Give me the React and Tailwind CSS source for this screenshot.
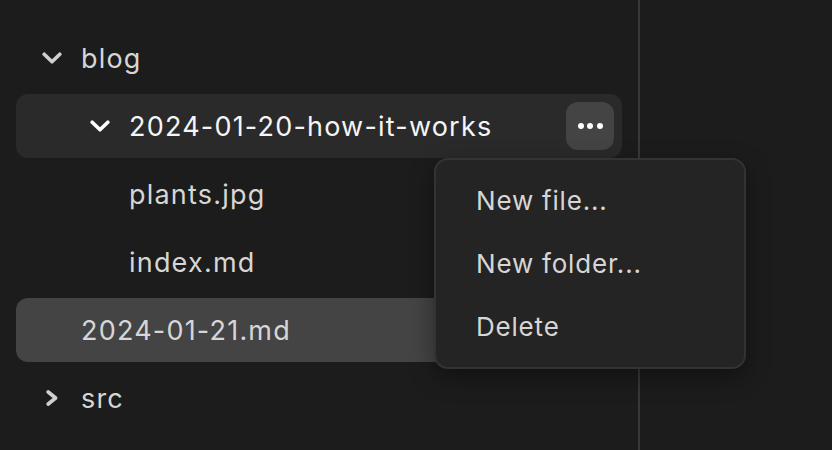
import React from "react";

const rows = [
  { name: "blog", depth: 0, kind: "open" },
  { name: "2024-01-20-how-it-works", depth: 1, kind: "open", active: true },
  { name: "plants.jpg", depth: 2, kind: "file" },
  { name: "index.md", depth: 2, kind: "file" },
  { name: "2024-01-21.md", depth: 1, kind: "file", selected: true },
  { name: "src", depth: 0, kind: "closed" },
];

function ChevronDown({ className }) {
  return (
    <svg width="20" height="12" viewBox="0 0 20 12" className={className}>
      <polyline
        points="2.2,2.2 10,9.8 17.8,2.2"
        fill="none"
        stroke="currentColor"
        strokeWidth="3.6"
        strokeLinecap="round"
        strokeLinejoin="round"
      />
    </svg>
  );
}

function ChevronRight({ className }) {
  return (
    <svg width="12" height="16" viewBox="0 0 12 16" className={className}>
      <polyline
        points="2.2,2 9.6,8 2.2,14"
        fill="none"
        stroke="currentColor"
        strokeWidth="3.6"
        strokeLinecap="round"
        strokeLinejoin="round"
      />
    </svg>
  );
}

function Row({ row }) {
  let pad = "pl-[26px]";
  if (row.kind === "open" && row.depth === 1) pad = "pl-[74px]";
  if (row.kind === "file" && row.depth === 1) pad = "pl-[65px]";
  if (row.kind === "file" && row.depth === 2) pad = "pl-[113px]";
  if (row.kind === "closed") pad = "pl-[30px]";

  let bg = "";
  if (row.active) bg = "bg-[#2a2a2a]";
  if (row.selected) bg = "bg-[#444444]";

  return (
    <div className={`h-16 flex items-center rounded-xl ${bg} ${pad}`}>
      {row.kind === "open" && (
        <ChevronDown className={row.active ? "text-white" : "text-[#d0d0d0]"} />
      )}
      {row.kind === "closed" && <ChevronRight className="text-[#d0d0d0]" />}
      <span
        className={`${row.kind === "open" ? "ml-[19px]" : ""} ${
          row.kind === "closed" ? "ml-[23px]" : ""
        } pt-[2px] text-[27px] tracking-[1.2px] ${row.active ? "text-[#f5f5f5]" : "text-[#d6d6d6]"}`}
      >
        {row.name}
      </span>
      {row.active && (
        <button className="ml-auto mr-2 w-12 h-12 rounded-xl bg-[#444444] flex items-center justify-center gap-[3.5px]">
          <span className="w-[6px] h-[6px] rounded-full bg-white" />
          <span className="w-[6px] h-[6px] rounded-full bg-white" />
          <span className="w-[6px] h-[6px] rounded-full bg-white" />
        </button>
      )}
    </div>
  );
}

export default function App() {
  return (
    <div
      className="relative w-[832px] h-[450px] bg-[#1c1c1c] flex overflow-hidden"
      style={{ fontFamily: "Inter, 'Noto Sans', sans-serif" }}
    >
      <div className="w-[640px] h-full border-r-2 border-[#393939] px-4 pt-[26px] flex flex-col gap-1">
        {rows.map((r) => (
          <Row key={r.name} row={r} />
        ))}
      </div>

      <div className="absolute left-[434px] top-[158px] w-[312px] py-[9px] rounded-[14px] bg-[#242424] border-2 border-[#333333] shadow-[0_8px_24px_rgba(0,0,0,0.4)]">
        {["New file...", "New folder...", "Delete"].map((t) => (
          <div
            key={t}
            className="h-[63px] flex items-center pl-[40px] text-[26px] tracking-[0.8px] text-[#d6d6d6]"
          >
            {t}
          </div>
        ))}
      </div>
    </div>
  );
}
